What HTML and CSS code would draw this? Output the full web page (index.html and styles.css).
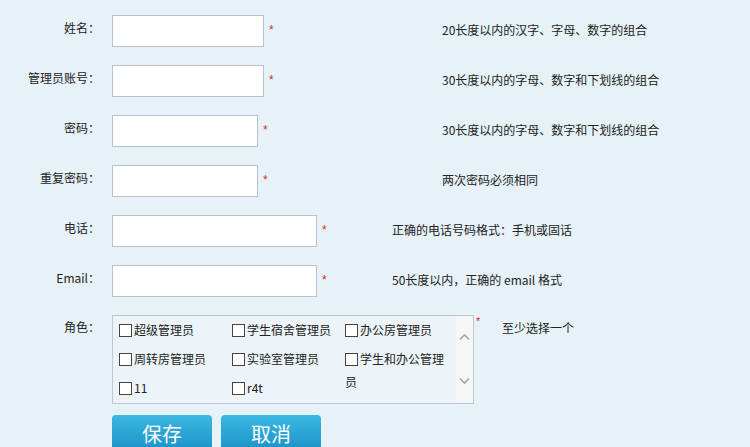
FILE: index.html
```html
<!DOCTYPE html>
<html lang="zh-CN">
<head>
    <meta charset="UTF-8">
    <title>添加管理员</title>
    <link rel="stylesheet" href="styles.css">
</head>
<body>
    <form class="admin-form">
        <div class="row">
            <label class="label">姓名：</label>
            <div class="field field-a">
                <input type="text" class="txt txt-m">
                <span class="req">*</span>
            </div>
            <span class="hint">20长度以内的汉字、字母、数字的组合</span>
        </div>
        <div class="row">
            <label class="label">管理员账号：</label>
            <div class="field field-a">
                <input type="text" class="txt txt-m">
                <span class="req">*</span>
            </div>
            <span class="hint">30长度以内的字母、数字和下划线的组合</span>
        </div>
        <div class="row">
            <label class="label">密码：</label>
            <div class="field field-a">
                <input type="password" class="txt txt-s">
                <span class="req">*</span>
            </div>
            <span class="hint">30长度以内的字母、数字和下划线的组合</span>
        </div>
        <div class="row">
            <label class="label">重复密码：</label>
            <div class="field field-a">
                <input type="password" class="txt txt-s">
                <span class="req">*</span>
            </div>
            <span class="hint">两次密码必须相同</span>
        </div>
        <div class="row">
            <label class="label">电话：</label>
            <div class="field field-b">
                <input type="text" class="txt txt-l">
                <span class="req">*</span>
            </div>
            <span class="hint">正确的电话号码格式：手机或固话</span>
        </div>
        <div class="row">
            <label class="label">Email：</label>
            <div class="field field-b">
                <input type="text" class="txt txt-l">
                <span class="req">*</span>
            </div>
            <span class="hint">50长度以内，正确的 email 格式</span>
        </div>
        <div class="row row-top">
            <label class="label label-top">角色：</label>
            <div class="field field-c">
                <div class="roles">
                    <div class="role-list">
                        <div class="role"><span class="chk"></span>超级管理员</div>
                        <div class="role"><span class="chk"></span>学生宿舍管理员</div>
                        <div class="role"><span class="chk"></span>办公房管理员</div>
                        <div class="role"><span class="chk"></span>周转房管理员</div>
                        <div class="role"><span class="chk"></span>实验室管理员</div>
                        <div class="role role-tall"><span class="chk"></span>学生和办公管理员</div>
                        <div class="role"><span class="chk"></span>11</div>
                        <div class="role"><span class="chk"></span>r4t</div>
                    </div>
                    <div class="scrollbar">
                        <svg width="17" height="17" viewBox="0 0 17 17"><path d="M4 10.5 L8.5 6 L13 10.5" fill="none" stroke="#a6a6a6" stroke-width="1.6"/></svg>
                        <svg width="17" height="17" viewBox="0 0 17 17"><path d="M4 6.5 L8.5 11 L13 6.5" fill="none" stroke="#a6a6a6" stroke-width="1.6"/></svg>
                    </div>
                </div>
                <span class="req req-top">*</span>
            </div>
            <span class="hint hint-top">至少选择一个</span>
        </div>
        <div class="buttons">
            <button type="button" class="btn">保存</button>
            <button type="button" class="btn">取消</button>
        </div>
    </form>
</body>
</html>
```

FILE: styles.css
```css
body {
    margin: 0;
    background-color: #e6f1f8;
    font-family: "Noto Sans CJK SC", "Liberation Sans", sans-serif;
    font-size: 12px;
    color: #222;
    overflow: hidden;
}
.admin-form {
    padding-top: 15px;
}
.row {
    display: flex;
    align-items: center;
    height: 32px;
    margin-bottom: 18px;
}
.row-top {
    align-items: flex-start;
    height: auto;
    margin-bottom: 11px;
}
.label {
    width: 100px;
    text-align: right;
    padding-bottom: 7px;
    flex-shrink: 0;
}
.label-top {
    padding-top: 3px;
}
.field {
    display: flex;
    align-items: center;
    margin-left: 12px;
    flex-shrink: 0;
}
.row-top .field {
    align-items: flex-start;
}
.field-a { width: 330px; }
.field-b { width: 280px; }
.field-c { width: 390px; }
.txt {
    box-sizing: border-box;
    height: 32px;
    border: 1px solid #b8c2ca;
    background: #fff;
    margin: 0;
    padding: 0 4px;
}
.txt-m { width: 152px; }
.txt-s { width: 146px; }
.txt-l { width: 205px; }
.req {
    color: #e0282e;
    font-family: "Liberation Sans", sans-serif;
    font-size: 12px;
    margin-left: 5px;
    padding-bottom: 3px;
}
.req-top {
    margin-left: 2px;
    font-size: 11px;
    line-height: 12px;
    padding: 0;
}
.hint {
    padding-bottom: 4px;
}
.hint-top {
    padding-top: 4px;
}
.roles {
    box-sizing: border-box;
    width: 362px;
    height: 89px;
    border: 1px solid #c4c8cc;
    background: #ecf4f9;
    display: flex;
}
.role-list {
    flex: 1;
    overflow: hidden;
    padding: 2px 0 0 6px;
    display: grid;
    grid-template-columns: 113px 113px 110px;
    grid-auto-rows: 29px;
    align-content: start;
}
.role {
    line-height: 23px;
}
.role-tall {
    grid-row: span 2;
}
.chk {
    display: inline-block;
    box-sizing: border-box;
    width: 13px;
    height: 13px;
    border: 1px solid #444;
    background: #fff;
    vertical-align: -2px;
    margin-right: 2px;
}
.scrollbar {
    width: 17px;
    flex-shrink: 0;
    background: #f4f6f7;
    display: flex;
    flex-direction: column;
    justify-content: space-between;
    padding: 13px 0 14px;
}
.buttons {
    display: flex;
    gap: 9px;
    margin-left: 112px;
}
.btn {
    width: 100px;
    height: 33px;
    border: none;
    border-radius: 4px 4px 0 0;
    background: linear-gradient(#3cb8e3, #1e95ca);
    color: #fff;
    font-family: "Noto Sans CJK SC", sans-serif;
    font-size: 20px;
    line-height: 29px;
    padding: 3px 0 0;
}
```
